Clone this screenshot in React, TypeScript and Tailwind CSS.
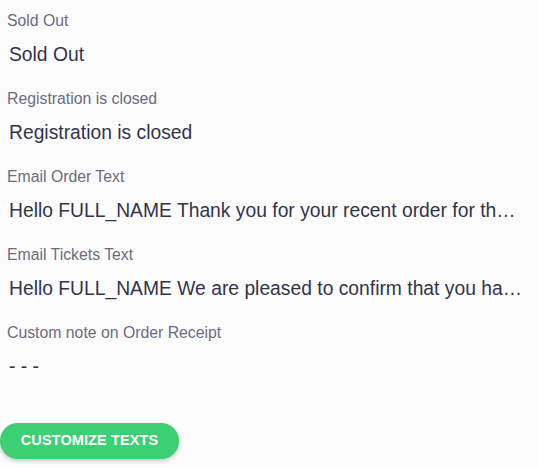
import React from "react";

const items = [
  { label: "Sold Out", value: "Sold Out" },
  { label: "Registration is closed", value: "Registration is closed" },
  {
    label: "Email Order Text",
    value:
      "Hello FULL_NAME Thank you for your recent order for the event EVENT_NAME. Your order number is ORDER_NUMBER.",
  },
  {
    label: "Email Tickets Text",
    value:
      "Hello FULL_NAME We are pleased to confirm that you have registered for EVENT_NAME.",
  },
  { label: "Custom note on Order Receipt", value: "- - -" },
];

export default function App() {
  return (
    <div
      className="w-[539px] h-[468px] bg-[#fcfcfd] overflow-hidden"
      style={{ fontFamily: '"Liberation Sans", Arial, sans-serif' }}
    >
      <div className="pt-[11px] pr-[16px] flex flex-col gap-[22px]">
        {items.map((it) => (
          <div key={it.label} className="flex flex-col">
            <div className="pl-[7px] text-[15.8px] leading-[20px] text-[#6c6b80]">
              {it.label}
            </div>
            <div className="mt-[12px] pl-[9px] text-[19.3px] leading-[24px] text-[#33334a] truncate">
              {it.value}
            </div>
          </div>
        ))}
      </div>
      <div className="mt-[44px]">
        <button className="h-[36px] w-[179px] rounded-full bg-[#3dcf74] text-white font-bold text-[14.5px] tracking-[0.1px] shadow-[0_2px_4px_rgba(0,0,0,0.22)] flex items-center justify-center">
          CUSTOMIZE TEXTS
        </button>
      </div>
    </div>
  );
}
